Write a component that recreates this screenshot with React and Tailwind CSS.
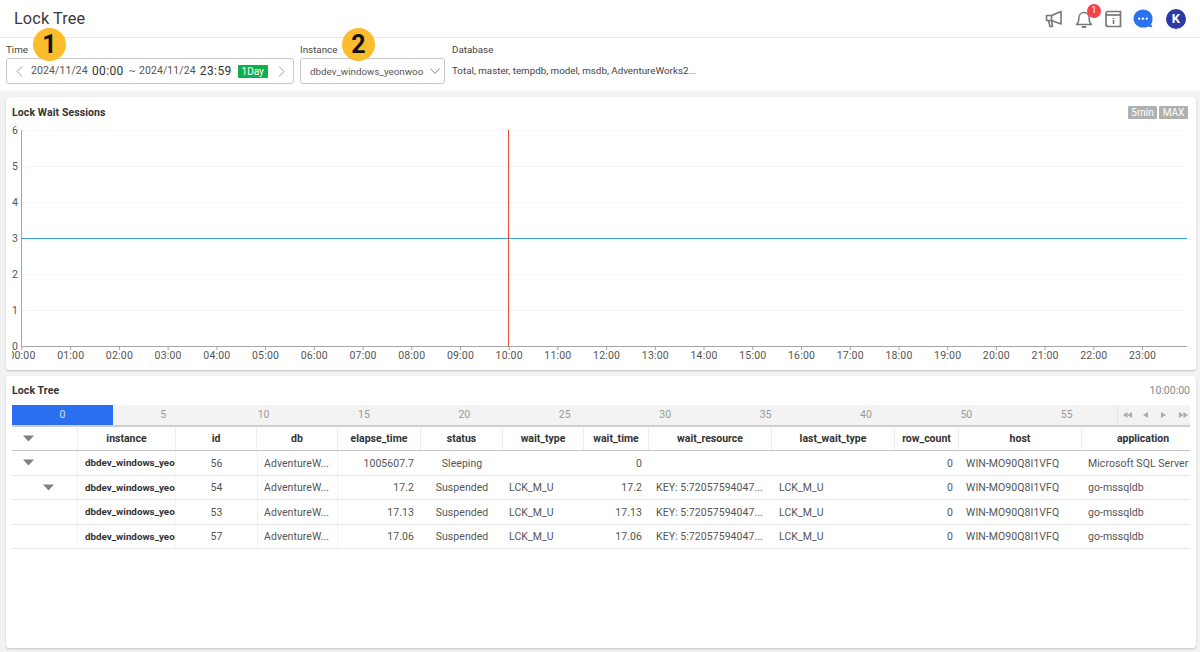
import React from "react";

const headers = ["", "instance", "id", "db", "elapse_time", "status", "wait_type", "wait_time", "wait_resource", "last_wait_type", "row_count", "host", "application"];
const gridCols = "grid grid-cols-[66px_98px_81px_81px_83px_82px_81px_65px_123px_123px_64px_123px_122px]";
const key = "KEY: 5:72057594047...";
const rows = [
  { arrow: 0, id: 56, el: "1005607.7", st: "Sleeping", wt: "", wtime: "0", res: "", last: "", app: "Microsoft SQL Server" },
  { arrow: 1, id: 54, el: "17.2", st: "Suspended", wt: "LCK_M_U", wtime: "17.2", res: key, last: "LCK_M_U", app: "go-mssqldb" },
  { arrow: -1, id: 53, el: "17.13", st: "Suspended", wt: "LCK_M_U", wtime: "17.13", res: key, last: "LCK_M_U", app: "go-mssqldb" },
  { arrow: -1, id: 57, el: "17.06", st: "Suspended", wt: "LCK_M_U", wtime: "17.06", res: key, last: "LCK_M_U", app: "go-mssqldb" },
];

const Tri = ({ className = "" }) => (
  <svg width="11" height="7" viewBox="0 0 11 7" className={className}>
    <path d="M0 0.5H11L5.5 6.5Z" fill="#7f7f7f" />
  </svg>
);

function Chart() {
  const hours = Array.from({ length: 24 }, (_, i) => i);
  const x = (h) => 22 + h * 48.72;
  return (
    <svg width="1190" height="245" viewBox="6 125 1190 245" className="block" style={{ fontFamily: "Roboto, sans-serif" }}>
      {[6, 5, 4, 3, 2, 1].map((v) => (
        <line key={v} x1="21" x2="1187" y1={346 - v * 36 + 0.5} y2={346 - v * 36 + 0.5} stroke="#ececec" strokeWidth="1" strokeDasharray="1 1" />
      ))}
      {[6, 5, 4, 3, 2, 1, 0].map((v) => (
        <text key={v} x="12" y={350 - v * 36} fontSize="10.5" fill="#555">{v}</text>
      ))}
      <line x1="21.5" x2="21.5" y1="130" y2="346" stroke="#a6a6a6" />
      <line x1="21" x2="1187" y1="346.5" y2="346.5" stroke="#a6a6a6" />
      {hours.map((h) => (
        <g key={h}>
          <line x1={x(h)} x2={x(h)} y1="346" y2="350" stroke="#a6a6a6" />
          <text x={x(h)} y="359" fontSize="10.5" fill="#555" textAnchor="middle" letterSpacing="0.2">
            {String(h).padStart(2, "0") + ":00"}
          </text>
        </g>
      ))}
      <rect x="6" y="350" width="6" height="12" fill="#fff" />
      <line x1="21" x2="1187" y1="238.5" y2="238.5" stroke="#3aa0e6" />
      <line x1="508.5" x2="508.5" y1="130" y2="346" stroke="#ee4b2b" />
    </svg>
  );
}

const Badge = ({ children, className }) => (
  <div className={"absolute top-[28px] w-[33px] h-[33px] rounded-full bg-[#fbbd2c] flex items-center justify-center text-[25px] font-bold text-[#111] " + className}>
    {children}
  </div>
);

export default function App() {
  return (
    <div className="relative w-[1200px] h-[652px] overflow-hidden bg-[#f2f2f2] text-[#444] font-['Roboto',sans-serif]">
      {/* Header */}
      <header className="h-[38px] bg-white border-b border-[#e8e8e8] flex items-center justify-between pl-[14px] pr-[14px]">
        <h1 className="text-[16.3px] leading-none text-[#3a3a3a] tracking-[0.1px] mt-[2px]">Lock Tree</h1>
        <div className="flex items-center">
          <svg width="18" height="18" viewBox="0 0 18 18" fill="none" stroke="#777" strokeWidth="1.6" className="mr-[12px]">
            <path d="M1.5 5.5H6.5L16 1.5V14L6.5 10.5H1.5Z" strokeLinejoin="round" />
            <path d="M6.5 5.5V10.5M3.5 10.5L5 16.5H7.5L6.5 10.5" strokeLinejoin="round" />
          </svg>
          <div className="relative mr-[12px] w-[18px] h-[18px]">
            <svg width="18" height="19" viewBox="0 0 18 19" fill="none" stroke="#777" strokeWidth="1.5">
              <path d="M1.5 14.5C3.5 13 3.8 11 3.8 8.5C3.8 5 6 2.5 9 2.5C12 2.5 14.2 5 14.2 8.5C14.2 11 14.5 13 16.5 14.5Z" strokeLinejoin="round" />
              <path d="M7.5 17H10.5" strokeLinecap="round" strokeWidth="1.8" />
            </svg>
            <div className="absolute left-[12px] top-[-6px] w-[14px] h-[14px] rounded-full bg-[#f8404c] text-white text-[9.5px] flex items-center justify-center">1</div>
          </div>
          <svg width="17" height="18" viewBox="0 0 17 18" fill="none" stroke="#777" strokeWidth="1.7" className="mr-[11px]">
            <path d="M2.5 1.5H15.5V16.5H3C1.8 16.5 1 15.7 1 14.5V4C1 2.6 1.6 1.5 2.5 1.5Z" />
            <path d="M1 5H15.5" />
            <path d="M8.5 8V8.9M8.5 10V14" strokeWidth="1.6" />
          </svg>
          <svg width="20" height="20" viewBox="0 0 20 20" className="mr-[13px]">
            <path d="M10 0.5C15 0.5 19.5 4.3 19.5 9.5C19.5 12 19 14 18 15.2L19.6 18.4L15.4 17.4C13.8 18.3 12 18.6 10 18.6C5 18.6 0.5 14.7 0.5 9.5C0.5 4.3 5 0.5 10 0.5Z" fill="#2a72f2" />
            <circle cx="6.2" cy="9.6" r="1.2" fill="#fff" />
            <circle cx="10" cy="9.6" r="1.2" fill="#fff" />
            <circle cx="13.8" cy="9.6" r="1.2" fill="#fff" />
          </svg>
          <div className="w-[20px] h-[20px] rounded-full bg-[#2b3ba5] text-white text-[13px] font-bold flex items-center justify-center">K</div>
        </div>
      </header>

      {/* Filter bar */}
      <section className="h-[53px] bg-white flex pl-[6px] text-[10.5px]">
        <div className="w-[288px] mr-[6px]">
          <div className="h-[20px] flex items-center pt-[4px] text-[#444] text-[9.8px]">Time</div>
          <div className="h-[26px] border border-[#c8c8c8] rounded-[3px] flex items-center pl-[8px]">
            <svg width="9" height="11" viewBox="0 0 9 11" fill="none" stroke="#999" className="mr-[7px]"><path d="M7 0.5L2 5.5L7 10.5" /></svg>
            <span className="text-[#555] tracking-[0.1px]">2024/11/24</span>
            <span className="text-[12px] text-[#333] ml-[4px] tracking-[0.4px]">00:00</span>
            <span className="ml-[5px] text-[#555]">~</span>
            <span className="ml-[3px] text-[#555] tracking-[0.1px]">2024/11/24</span>
            <span className="text-[12px] text-[#333] ml-[4px] tracking-[0.4px]">23:59</span>
            <span className="ml-[6px] w-[30px] h-[13px] bg-[#0db14b] rounded-[1px] text-white text-[10px] leading-[13px] text-center">1Day</span>
            <svg width="9" height="11" viewBox="0 0 9 11" fill="none" stroke="#999" className="ml-[9px]"><path d="M2 0.5L7 5.5L2 10.5" /></svg>
          </div>
        </div>
        <div className="w-[145px] mr-[7px]">
          <div className="h-[20px] flex items-center pt-[4px] text-[#444] text-[9.8px]">Instance</div>
          <div className="h-[26px] border border-[#c8c8c8] rounded-[3px] flex items-center pl-[9px] pr-[4px] justify-between">
            <span className="text-[#555] text-[9.8px] pt-[2px] whitespace-nowrap">dbdev_windows_yeonwoo</span>
            <svg width="10" height="7" viewBox="0 0 10 7" fill="none" stroke="#888"><path d="M0.5 0.5L5 5.5L9.5 0.5" /></svg>
          </div>
        </div>
        <div className="text-[9.8px]">
          <div className="h-[20px] flex items-center pt-[4px] text-[#444]">Database</div>
          <div className="h-[26px] flex items-center text-[#444]">Total, master, tempdb, model, msdb, AdventureWorks2...</div>
        </div>
      </section>

      {/* Chart card */}
      <section className="mt-[6px] ml-[6px] w-[1190px] h-[273px] bg-white rounded-[3px] shadow-[0_1px_2px_rgba(0,0,0,0.2)] overflow-hidden">
        <div className="h-[28px] pt-[3px] flex items-center justify-between pl-[6px] pr-[8px]">
          <span className="text-[10.5px] font-bold text-[#333] tracking-[0.1px]">Lock Wait Sessions</span>
          <div className="flex gap-[2px]">
            <span className="h-[13px] w-[29px] bg-[#b0b0b0] rounded-[1px] text-white text-[10px] leading-[13px] text-center">5min</span>
            <span className="h-[13px] w-[29px] bg-[#b0b0b0] rounded-[1px] text-white text-[10px] leading-[13px] text-center">MAX</span>
          </div>
        </div>
        <Chart />
      </section>

      {/* Lock Tree card */}
      <section className="mt-[6px] ml-[6px] w-[1190px] h-[272px] bg-white rounded-[3px] shadow-[0_1px_2px_rgba(0,0,0,0.2)] overflow-hidden pl-[6px] pr-[6px]">
        <div className="h-[29px] flex items-center justify-between">
          <span className="text-[10.5px] font-bold text-[#333] tracking-[0.1px]">Lock Tree</span>
          <span className="text-[10.5px] text-[#888]">10:00:00</span>
        </div>
        <div className="h-[20px] flex bg-[#f3f3f3] text-[10.5px] text-[#999]">
          {[0, 5, 10, 15, 20, 25, 30, 35, 40, 50, 55].map((n, i) => (
            <div key={n} className={"flex items-center justify-center " + (i === 0 ? "w-[101px] bg-[#2a6ff0] text-[#cfe0ff]" : "w-[100.4px]")}>{n}</div>
          ))}
          <div className="flex-1 flex items-center border-l border-[#e4e4e4] pl-[5px]">
            <svg width="9" height="6" viewBox="0 0 9 6" fill="#aaa"><path d="M4.5 0V6L0 3ZM9 0V6L4.5 3Z" /></svg>
            <svg width="5" height="6" viewBox="0 0 5 6" fill="#aaa" className="ml-[11px]"><path d="M5 0V6L0 3Z" /></svg>
            <svg width="5" height="6" viewBox="0 0 5 6" fill="#aaa" className="ml-[13px]"><path d="M0 0V6L5 3Z" /></svg>
            <svg width="9" height="6" viewBox="0 0 9 6" fill="#aaa" className="ml-[13px]"><path d="M0 0V6L4.5 3ZM4.5 0V6L9 3Z" /></svg>
          </div>
        </div>
        <div className="w-[1178px] overflow-hidden text-[10.5px]">
          <div className={gridCols + " w-[1212px] h-[26px] border-t-2 border-b border-t-[#cfcfcf] border-b-[#c4c4c4] font-bold text-[#333]"}>
            {headers.map((h, i) => (
              <div key={i} className={"flex items-center justify-center border-r border-[#ececec] " + (i === 12 ? "border-r-0" : "")}>
                {i === 0 ? <Tri className="-ml-[33px] w-[11px]" /> : h}
              </div>
            ))}
          </div>
          {rows.map((r) => (
            <div key={r.id} className={gridCols + " w-[1212px] h-[24.5px] border-b border-[#e6e6e6] text-[#555] tracking-[0.06px] items-center [&>div]:pt-[2px]"}>
              <div className="h-full flex items-center border-r border-[#f4f4f4]">
                {r.arrow === 0 && <Tri className="ml-[11px] -mt-[2px]" />}
                {r.arrow === 1 && <Tri className="ml-[31px] -mt-[2px]" />}
              </div>
              <div className="h-full flex items-center pl-[7px] overflow-hidden whitespace-nowrap font-bold text-[#333] text-[9.8px] tracking-normal border-r border-[#f4f4f4]">dbdev_windows_yeonwoo</div>
              <div className="text-center">{r.id}</div>
              <div className="h-full flex items-center pl-[6px] border-x border-[#f0f0f0]">AdventureW...</div>
              <div className="text-right pr-[7px]">{r.el}</div>
              <div className="text-center">{r.st}</div>
              <div className="pl-[6px]">{r.wt}</div>
              <div className="text-right pr-[7px]">{r.wtime}</div>
              <div className="pl-[7px] whitespace-nowrap">{r.res}</div>
              <div className="pl-[7px]">{r.last}</div>
              <div className="text-right pr-[6px]">0</div>
              <div className="pl-[7px]">WIN-MO90Q8I1VFQ</div>
              <div className="pl-[6px] whitespace-nowrap">{r.app}</div>
            </div>
          ))}
        </div>
      </section>

      <Badge className="left-[33px]">1</Badge>
      <Badge className="left-[342px]">2</Badge>
    </div>
  );
}
